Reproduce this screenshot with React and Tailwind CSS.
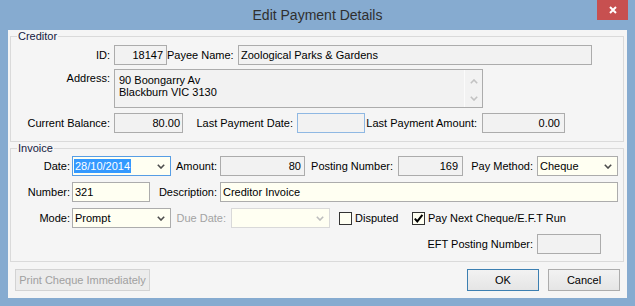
import React from "react";

const Chevron = ({ color = "#4d4d4d" }) => (
  <svg width="8" height="5" viewBox="0 0 8 5" className="shrink-0">
    <path d="M0.8 0.8 L4 4 L7.2 0.8" fill="none" stroke={color} strokeWidth="1.6" />
  </svg>
);

const CheckBox = ({ checked }) => (
  <div className="w-[13px] h-[13px] border border-[#333333] bg-[#fffff2] flex items-center justify-center shrink-0">
    {checked && (
      <svg width="11" height="11" viewBox="0 0 11 11">
        <path d="M1.8 5.6 L4.3 8.4 L9.4 1.8" fill="none" stroke="#000" strokeWidth="2" />
      </svg>
    )}
  </div>
);

export default function App() {
  return (
    <div className="w-[635px] h-[306px] bg-[#86abd0] flex flex-col font-['Liberation_Sans',Arial,sans-serif] text-[11px] text-black whitespace-nowrap select-none overflow-hidden">
      {/* Title bar */}
      <div className="relative h-[30px] shrink-0 flex items-center justify-center">
        <span className="text-[14px] text-[#2f2f2f] pt-[1px]">Edit Payment Details</span>
        <div className="absolute top-0 right-[7px] w-[31px] h-[20px] bg-[#c75050] flex items-center justify-center">
          <svg width="8" height="8" viewBox="0 0 8 8">
            <path d="M1 1 L7 7 M7 1 L1 7" stroke="#fff" strokeWidth="2" />
          </svg>
        </div>
      </div>

      {/* Client area */}
      <div className="ml-[8px] w-[619px] h-[268px] bg-[#f5f5f5] flex flex-col">
        {/* Creditor */}
        <fieldset className="ml-[2px] w-[614px] border border-[#dadada] pt-[2px] pb-[8px]">
          <legend className="ml-[6px] px-[1px] leading-[13px] text-[#14203f]">Creditor</legend>
          <div className="flex items-center h-[20px]">
            <div className="w-[99px] text-right shrink-0">ID:</div>
            <div className="ml-[4px] w-[53px] h-[20px] border border-[#acacac] bg-[#f2f2f2] flex items-center justify-end pr-[3px]">18147</div>
            <div className="w-[66px] text-right shrink-0">Payee Name:</div>
            <div className="ml-[5px] w-[354px] h-[20px] border border-[#acacac] bg-[#f2f2f2] flex items-center pl-[2px]">Zoological Parks &amp; Gardens</div>
          </div>
          <div className="flex items-start h-[39px] mt-[4px]">
            <div className="w-[99px] text-right shrink-0 pt-[3px] leading-[13px]">Address:</div>
            <div className="ml-[4px] w-[369px] h-[39px] border border-[#acacac] bg-[#f2f2f2] flex">
              <div className="flex-1 pl-[4px] pt-[4px] leading-[12px]">
                <div>90 Boongarry Av</div>
                <div>Blackburn VIC 3130</div>
              </div>
              <div className="w-[18px] border-l border-[#fbfbfb] flex flex-col items-center justify-between pt-[9px] pb-[6px]">
                <svg width="8" height="5" viewBox="0 0 8 5">
                  <path d="M0.8 4.2 L4 1 L7.2 4.2" fill="none" stroke="#c2c2c2" strokeWidth="1.6" />
                </svg>
                <Chevron color="#c2c2c2" />
              </div>
            </div>
          </div>
          <div className="flex items-center h-[20px] mt-[5px]">
            <div className="w-[99px] text-right shrink-0">Current Balance:</div>
            <div className="ml-[4px] w-[69px] h-[20px] border border-[#acacac] bg-[#f2f2f2] flex items-center justify-end pr-[2px]">80.00</div>
            <div className="w-[110px] text-right shrink-0">Last Payment Date:</div>
            <div className="ml-[4px] w-[68px] h-[20px] border border-[#8fb8e3] bg-[#f2f2f2]"></div>
            <div className="w-[112px] text-right shrink-0">Last Payment Amount:</div>
            <div className="ml-[5px] w-[83px] h-[20px] border border-[#acacac] bg-[#f2f2f2] flex items-center justify-end pr-[4px]">0.00</div>
          </div>
        </fieldset>

        {/* Invoice */}
        <fieldset className="ml-[2px] w-[614px] border border-[#dadada] pt-[1px] pb-[7px]">
          <legend className="ml-[6px] px-[1px] leading-[13px] text-[#14203f]">Invoice</legend>
          <div className="flex items-center h-[20px]">
            <div className="w-[59px] text-right shrink-0">Date:</div>
            <div className="ml-[2px] w-[99px] h-[20px] border border-[#569de5] bg-[#fffff2] flex items-center justify-between pl-[1px] pr-[5px]">
              <span className="bg-[#3399ff] text-white px-[1px] leading-[14px]">28/10/2014</span>
              <Chevron />
            </div>
            <div className="w-[46px] text-right shrink-0">Amount:</div>
            <div className="ml-[3px] w-[85px] h-[20px] border border-[#acacac] bg-[#f2f2f2] flex items-center justify-end pr-[3px]">80</div>
            <div className="w-[88px] text-right shrink-0">Posting Number:</div>
            <div className="ml-[5px] w-[65px] h-[20px] border border-[#acacac] bg-[#f2f2f2] flex items-center justify-end pr-[4px]">169</div>
            <div className="w-[70px] text-right shrink-0">Pay Method:</div>
            <div className="ml-[4px] w-[81px] h-[20px] border border-[#acacac] bg-[#fffff2] flex items-center justify-between pl-[2px] pr-[5px]">
              <span>Cheque</span>
              <Chevron />
            </div>
          </div>
          <div className="flex items-center h-[20px] mt-[6px]">
            <div className="w-[59px] text-right shrink-0">Number:</div>
            <div className="ml-[2px] w-[78px] h-[20px] border border-[#acacac] bg-[#fffff2] flex items-center pl-[2px]">321</div>
            <div className="w-[67px] text-right shrink-0">Description:</div>
            <div className="ml-[3px] w-[398px] h-[20px] border border-[#acacac] bg-[#fffff2] flex items-center pl-[2px]">Creditor Invoice</div>
          </div>
          <div className="flex items-center h-[20px] mt-[6px]">
            <div className="w-[59px] text-right shrink-0">Mode:</div>
            <div className="ml-[2px] w-[99px] h-[20px] border border-[#acacac] bg-[#fffff2] flex items-center justify-between pl-[2px] pr-[5px]">
              <span>Prompt</span>
              <Chevron />
            </div>
            <div className="w-[55px] text-right shrink-0 text-[#a3a3a3]">Due Date:</div>
            <div className="ml-[5px] w-[99px] h-[20px] border border-[#d9d9d9] bg-[#fffff2] flex items-center justify-end pr-[5px]">
              <Chevron color="#bdbdbd" />
            </div>
            <div className="ml-[9px]">
              <CheckBox />
            </div>
            <div className="ml-[3px] w-[57px] shrink-0">Disputed</div>
            <CheckBox checked />
            <div className="ml-[3px] shrink-0">Pay Next Cheque/E.F.T Run</div>
          </div>
          <div className="flex items-center h-[20px] mt-[6px]">
            <div className="w-[522px] text-right shrink-0">EFT Posting Number:</div>
            <div className="ml-[4px] w-[64px] h-[20px] border border-[#acacac] bg-[#f2f2f2]"></div>
          </div>
        </fieldset>

        {/* Buttons */}
        <div className="flex items-center justify-between px-[7px] pt-[7px]">
          <div className="w-[135px] h-[22px] border border-[#d3d3d3] bg-[#ececec] text-[#a0a0a0] flex items-center justify-center">
            Print Cheque Immediately
          </div>
          <div className="flex gap-[9px]">
            <div className="w-[72px] h-[22px] border border-[#3c7fb1] bg-linear-to-b from-[#f2f2f2] to-[#e5e5e5] flex items-center justify-center">
              OK
            </div>
            <div className="w-[72px] h-[22px] border border-[#acacac] bg-linear-to-b from-[#f2f2f2] to-[#e5e5e5] flex items-center justify-center">
              Cancel
            </div>
          </div>
        </div>
      </div>
    </div>
  );
}
